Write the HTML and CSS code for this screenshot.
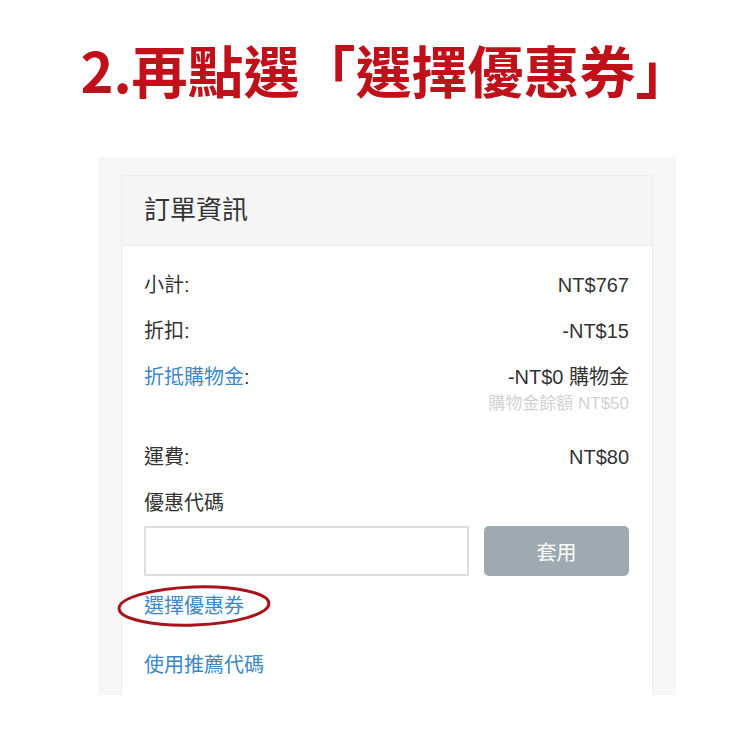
FILE: index.html
```html
<!DOCTYPE html>
<html lang="zh-Hant">
<head>
    <meta charset="UTF-8">
    <meta name="viewport" content="width=device-width, initial-scale=1.0">
    <title>選擇優惠券</title>
    <link rel="stylesheet" href="styles.css">
</head>
<body>
    <h1 class="step-title">2.再點選「選擇優惠券」</h1>

    <div class="panel">
        <div class="order-card">
            <div class="card-header">訂單資訊</div>
            <div class="card-body">
                <div class="row"><span>小計:</span><span>NT$767</span></div>
                <div class="row"><span>折扣:</span><span>-NT$15</span></div>
                <div class="row"><span class="link">折抵購物金<span class="plain">:</span></span><span>-NT$0 購物金</span></div>
                <div class="note">購物金餘額 NT$50</div>
                <div class="row row-gap"><span>運費:</span><span>NT$80</span></div>
                <div class="row"><span>優惠代碼</span></div>
                <div class="coupon-form">
                    <input type="text" class="coupon-input">
                    <button class="apply-btn">套用</button>
                </div>
                <div class="coupon-link">
                    <a href="#" class="link">選擇優惠券</a>
                    <svg class="circle-mark" width="160" height="46" viewBox="0 0 160 46">
                        <ellipse cx="78" cy="23" rx="75" ry="19" fill="none" stroke="#a8141b" stroke-width="3" transform="rotate(-2 78 23)"/>
                    </svg>
                </div>
                <div class="referral-link"><a href="#" class="link">使用推薦代碼</a></div>
            </div>
        </div>
    </div>
</body>
</html>
```

FILE: styles.css
```css
body {
    margin: 0;
    padding: 0;
    background-color: #fff;
    font-family: "Liberation Sans", "Noto Sans CJK TC", sans-serif;
    color: #333;
}
.step-title {
    margin: 0;
    padding: 34px 0 0 22px;
    height: 74px;
    line-height: 70px;
    text-align: center;
    font-family: "Noto Sans CJK TC", sans-serif;
    font-size: 56px;
    font-weight: 700;
    color: #c0111b;
}
.panel {
    margin: 49px 0 0 98px;
    width: 532px;
    height: 520px;
    padding: 18px 23px 0;
    background-color: #f7f7f8;
    overflow: hidden;
}
.order-card {
    background: #fff;
    border: 1px solid #ececec;
    border-bottom: none;
    height: 600px;
}
.card-header {
    height: 69px;
    line-height: 69px;
    padding-left: 22px;
    background-color: #f5f5f5;
    border-bottom: 1px solid #ececec;
    font-size: 26px;
    color: #333;
}
.card-body {
    padding: 16px 23px 0 22px;
    font-size: 20px;
}
.row {
    display: flex;
    justify-content: space-between;
    line-height: 46px;
    height: 46px;
}
.row-gap {
    margin-top: 20px;
}
.link {
    color: #3b87c7;
    text-decoration: none;
}
.plain {
    color: #333;
}
.note {
    margin-top: -6px;
    text-align: right;
    font-size: 17px;
    line-height: 20px;
    color: #d2d2d2;
}
.coupon-form {
    display: flex;
    gap: 15px;
}
.coupon-input {
    box-sizing: border-box;
    width: 325px;
    height: 50px;
    margin: 0;
    border: 2px solid #dedede;
    border-radius: 1px;
}
.apply-btn {
    width: 145px;
    height: 50px;
    border: none;
    border-radius: 5px;
    background-color: #9ea9b0;
    color: #fff;
    font-family: "Liberation Sans", "Noto Sans CJK TC", sans-serif;
    font-size: 20px;
}
.coupon-link {
    position: relative;
    margin-top: 7px;
    line-height: 46px;
    height: 46px;
}
.circle-mark {
    position: absolute;
    left: -28px;
    top: 0;
}
.referral-link {
    margin-top: 13px;
    line-height: 46px;
}
```
